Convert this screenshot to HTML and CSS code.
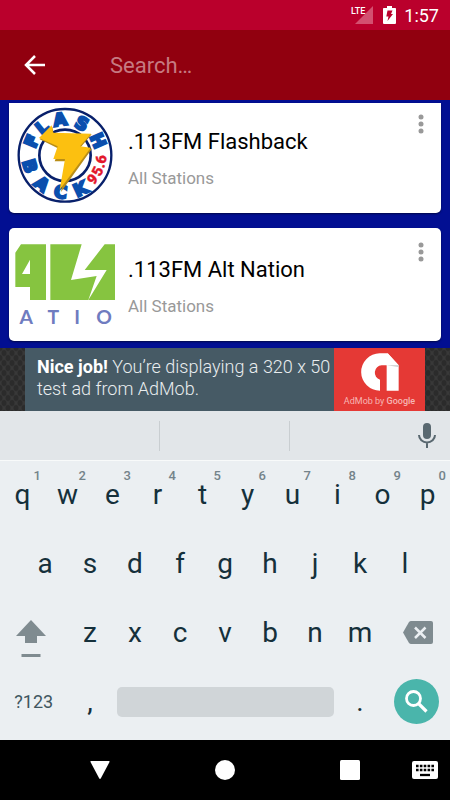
FILE: index.html
```
<!DOCTYPE html>
<html lang="en">
<head>
  <meta charset="UTF-8">
  <meta name="viewport" content="width=device-width, initial-scale=1.0">
  <title>Radio Stations</title>
  <link rel="stylesheet" href="styles.css">
</head>
<body>
<div class="screen">
  <!-- Status bar -->
  <div class="status-bar">
    <svg class="signal" width="24" height="20" viewBox="0 0 24 20">
      <path d="M23 1v18H5z" fill="#d35070"/>
      <text x="1" y="9" class="lte">LTE</text>
    </svg>
    <svg width="13" height="18" viewBox="0 0 13 18">
      <path d="M4 0h5v2h3.200q.8 0 .8.800V17q0 1-1 1H1q-1 0-1-1V2.800Q0 2 .8 2H4z" fill="#fff"/>
      <path d="M4.500 4.500h5L8 8h2l-5.500 7 1-4.500H3.300z" fill="#ba002c"/>
    </svg>
    <span class="clock">1:57</span>
  </div>

  <!-- Search toolbar -->
  <header class="toolbar">
    <button class="back" aria-label="Back">
      <svg width="22" height="22" viewBox="0 0 22 22" fill="none" stroke="#fff" stroke-width="2.500">
        <path d="M21 11H3M11 2l-9 9 9 9"/>
      </svg>
    </button>
    <input class="search" type="text" placeholder="Search…" aria-label="Search">
  </header>

  <!-- Stations -->
  <main class="stations">
    <article class="card card-first">
      <svg class="logo" viewBox="45 33 300 300">
        <g transform="translate(195 181)">
          <circle r="139" fill="#fff" stroke="#08206b" stroke-width="7"/>
          <circle r="77" fill="#fff" stroke="#08206b" stroke-width="8"/>
          <g class="ring-text">
            <text y="-90" transform="rotate(-67)">F</text>
            <text y="-90" transform="rotate(-39)">L</text>
            <text y="-90" transform="rotate(-8)">A</text>
            <text y="-90" transform="rotate(28)">S</text>
            <text y="-90" transform="rotate(66)">H</text>
            <text y="129" transform="rotate(73)">B</text>
            <text y="129" transform="rotate(39)">A</text>
            <text y="129" transform="rotate(7)">C</text>
            <text y="129" transform="rotate(-25)">K</text>
          </g>
          <g class="ring-freq">
            <text y="124" transform="rotate(-49)">9</text>
            <text y="124" transform="rotate(-64)">5</text>
            <text y="124" transform="rotate(-74)">.</text>
            <text y="124" transform="rotate(-84)">6</text>
          </g>
          <path d="M-76-48l38-37 4 20 114 2-33 39 34 4-93 130 18-92h-37l14-37z" fill="#b98d16"/>
          <path d="M-78-52l38-38 4 22 114 3-33 38 32 4-93 126 16-92h-35l13-38z" fill="#fcc010"/>
        </g>
      </svg>
      <div class="card-text">
        <h2>.113FM Flashback</h2>
        <p>All Stations</p>
      </div>
      <button class="more" aria-label="More options">
        <svg width="6" height="20" viewBox="0 0 6 20" fill="#999">
          <circle cx="3" cy="3" r="2.500"/><circle cx="3" cy="10" r="2.500"/><circle cx="3" cy="17" r="2.500"/>
        </svg>
      </button>
    </article>

    <article class="card">
      <svg class="logo" viewBox="45 42 300 300">
        <path d="M63 73h75v167H90v-39H46V98zM90 119l-24 43h24z" fill="#86c440" fill-rule="evenodd"/>
        <path d="M151 73h94l-32 107 77-12-25 72H151zM314 73h33v167h-82l55-90h-66z" fill="#86c440"/>
        <g class="alt-text">
          <text x="79" y="312">A</text>
          <text x="160" y="312">T</text>
          <text x="231" y="312">I</text>
          <text x="312" y="312">O</text>
        </g>
      </svg>
      <div class="card-text">
        <h2>.113FM Alt Nation</h2>
        <p>All Stations</p>
      </div>
      <button class="more" aria-label="More options">
        <svg width="6" height="20" viewBox="0 0 6 20" fill="#999">
          <circle cx="3" cy="3" r="2.500"/><circle cx="3" cy="10" r="2.500"/><circle cx="3" cy="17" r="2.500"/>
        </svg>
      </button>
    </article>
  </main>

  <!-- Ad banner -->
  <aside class="ad">
    <div class="ad-text">
      <p><strong>Nice job!</strong> <span>You’re displaying a 320 x 50</span></p>
      <p>test ad from AdMob.</p>
    </div>
    <div class="ad-brand">
      <svg width="38" height="38" viewBox="0 0 114 114">
        <path d="M56 1h24l33 36v76H77V37H62a22 22 0 0 0-5 43v33A56 56 0 0 1 56 1z" fill="#fff"/>
        <path d="M77 37h36L80 1z" fill="#fff"/>
        <path d="M77 37h36v5z" fill="#c9c9c9"/>
      </svg>
      <span>AdMob by <b>Google</b></span>
    </div>
  </aside>

  <!-- Keyboard -->
  <section class="keyboard" aria-label="Keyboard">
    <div class="suggestions">
      <span></span>
      <span></span>
      <span></span>
      <button class="mic" aria-label="Voice input">
        <svg width="18" height="25" viewBox="0 0 18 25">
          <rect x="5" y="0" width="8" height="16" rx="4" fill="#596870"/>
          <path d="M1 12a8 7.500 0 0 0 16 0M9 19.500V25" fill="none" stroke="#596870" stroke-width="2"/>
        </svg>
      </button>
    </div>

    <div class="row">
      <button class="key">q<sup>1</sup></button>
      <button class="key">w<sup>2</sup></button>
      <button class="key">e<sup>3</sup></button>
      <button class="key">r<sup>4</sup></button>
      <button class="key">t<sup>5</sup></button>
      <button class="key">y<sup>6</sup></button>
      <button class="key">u<sup>7</sup></button>
      <button class="key">i<sup>8</sup></button>
      <button class="key">o<sup>9</sup></button>
      <button class="key">p<sup>0</sup></button>
    </div>

    <div class="row">
      <button class="key">a</button>
      <button class="key">s</button>
      <button class="key">d</button>
      <button class="key">f</button>
      <button class="key">g</button>
      <button class="key">h</button>
      <button class="key">j</button>
      <button class="key">k</button>
      <button class="key">l</button>
    </div>

    <div class="row">
      <button class="key key-wide key-shift" aria-label="Shift">
        <svg width="30" height="38" viewBox="0 0 30 38" fill="#7f8b90">
          <path d="M15 0l15 16H21v7H9v-7H0z"/>
          <path d="M5.500 34h19v3h-19z"/>
        </svg>
      </button>
      <button class="key">z</button>
      <button class="key">x</button>
      <button class="key">c</button>
      <button class="key">v</button>
      <button class="key">b</button>
      <button class="key">n</button>
      <button class="key">m</button>
      <button class="key key-wide key-delete" aria-label="Delete">
        <svg width="30" height="23" viewBox="0 0 30 23">
          <path d="M8 0h20q2 0 2 2v19q0 2-2 2H8q-1 0-2-1L0 11.500 6 1q1-1 2-1z" fill="#7f8b90"/>
          <path d="M12 6.500l10.500 10.500M22.500 6.500L12 17" stroke="#ebeff2" stroke-width="2.500"/>
        </svg>
      </button>
    </div>

    <div class="row">
      <button class="key key-wide key-symbols">?123</button>
      <button class="key">,</button>
      <button class="key-space" aria-label="Space"></button>
      <button class="key">.</button>
      <button class="key key-wide" aria-label="Search">
        <svg width="45" height="45" viewBox="0 0 45 45">
          <circle cx="22.500" cy="22.500" r="22.500" fill="#4ab5ab"/>
          <circle cx="19.500" cy="19.500" r="7" fill="none" stroke="#fff" stroke-width="2.800"/>
          <path d="M24.500 24.500l8 8" stroke="#fff" stroke-width="3.200"/>
        </svg>
      </button>
    </div>
  </section>

  <!-- Navigation bar -->
  <nav class="nav-bar">
    <button aria-label="Hide keyboard">
      <svg width="20" height="20" viewBox="0 0 20 20"><path d="M1 1h18q1 0 .5 1l-8.500 16q-1 2-2 0L.5 2Q0 1 1 1z" fill="#fff"/></svg>
    </button>
    <button aria-label="Home">
      <svg width="20" height="20" viewBox="0 0 20 20"><circle cx="10" cy="10" r="10" fill="#fff"/></svg>
    </button>
    <button aria-label="Recent apps">
      <svg width="20" height="20" viewBox="0 0 20 20"><rect width="20" height="20" rx="1.500" fill="#fff"/></svg>
    </button>
    <button class="nav-ime" aria-label="Switch keyboard">
      <svg width="26" height="18" viewBox="0 0 26 18">
        <rect width="26" height="18" rx="2" fill="#fff"/>
        <path d="M4 5h18M4 9h18" stroke="#000" stroke-width="2.300" stroke-dasharray="2.600 1.250"/>
        <path d="M8 14h10" stroke="#000" stroke-width="2.300"/>
      </svg>
    </button>
  </nav>
</div>
</body>
</html>
```

FILE: styles.css
```
* {
  box-sizing: border-box;
}

body {
  margin: 0;
  font-family: Roboto, sans-serif;
  background: #000;
}

button {
  padding: 0;
  border: 0;
  background: none;
  font: inherit;
  color: inherit;
  cursor: pointer;
}

svg {
  display: block;
}

.screen {
  display: flex;
  flex-direction: column;
  min-height: 100vh;
}

/* Status bar */
.status-bar {
  display: flex;
  align-items: center;
  justify-content: flex-end;
  height: 30px;
  padding: 0 11px;
  background: #ba002c;
  color: #fff;
}

.signal {
  margin-right: 9px;
}

.lte {
  font-size: 9px;
  font-weight: 500;
  fill: #fff;
}

.clock {
  margin-left: 8px;
  font-size: 18px;
}

/* Toolbar */
.toolbar {
  display: flex;
  align-items: center;
  height: 70px;
  background: #91000f;
}

.back {
  padding: 0 24px;
}

.search {
  flex: 1;
  min-width: 0;
  margin-left: 40px;
  padding: 0;
  border: 0;
  outline: 0;
  background: none;
  color: #fff;
  font-family: inherit;
  font-size: 22px;
}

.search::placeholder {
  color: #c67a82;
  opacity: 1;
}

/* Station list */
.stations {
  flex: 1;
  display: flex;
  flex-direction: column;
  gap: 15px;
  padding: 3px 9px 7px;
  background: #020f92;
}

.card {
  display: flex;
  align-items: flex-start;
  padding: 6px 17px 7px 6px;
  border-radius: 5px;
  background: #fff;
  box-shadow: 0 1px 2px rgba(0, 0, 0, 0.5);
}

/* scrolled partly under the toolbar */
.card-first {
  padding-top: 3px;
  border-radius: 0 0 5px 5px;
}

.logo {
  width: 100px;
  height: 100px;
  flex-shrink: 0;
}

.card-text {
  flex: 1;
  padding: 23px 0 0 13px;
}

.card-text h2 {
  margin: 0 0 12px;
  font-size: 22px;
  line-height: 26px;
  font-weight: 400;
  color: #000;
}

.card-text p {
  margin: 0;
  font-size: 17px;
  line-height: 22px;
  color: #999;
}

.more {
  padding-top: 8px;
}

.ring-text {
  font-family: "DejaVu Sans", sans-serif;
  font-size: 52px;
  font-weight: 700;
  fill: #0a4fae;
  stroke: #0a4fae;
  stroke-width: 7;
  text-anchor: middle;
}

.ring-freq {
  font-family: Roboto, sans-serif;
  font-size: 44px;
  font-weight: 900;
  fill: #e3172b;
  stroke: #e3172b;
  stroke-width: 1;
  text-anchor: middle;
}

.alt-text {
  font-family: Lato, sans-serif;
  font-size: 58px;
  font-weight: 700;
  fill: #6f7cc0;
  text-anchor: middle;
}

/* Ad banner */
.ad {
  display: flex;
  height: 63px;
  padding: 0 25px;
  background-color: #383838;
  background-image: radial-gradient(#2b2b2b 2px, transparent 3px), radial-gradient(#2b2b2b 2px, transparent 3px);
  background-size: 8px 10px;
  background-position: 0 0, 4px 5px;
}

.ad-text {
  flex: 1;
  padding: 8px 0 0 12px;
  background: #465a65;
  color: #e9edef;
  font-size: 18px;
  line-height: 22px;
  font-weight: 300;
}

.ad-text p {
  margin: 0;
}

.ad-text strong {
  font-weight: 700;
  color: #fff;
}

.ad-brand {
  display: flex;
  flex-direction: column;
  align-items: center;
  width: 91px;
  padding-top: 5px;
  background: #e53935;
  color: #f6b5b3;
  font-size: 9px;
  line-height: 20px;
}

.ad-brand b {
  font-weight: 500;
}

/* Keyboard */
.keyboard {
  padding-bottom: 3px;
  background: #ebeff2;
  color: #15303b;
}

.suggestions {
  display: grid;
  grid-template-columns: 130px 130px 1fr 46px;
  align-items: center;
  height: 50px;
  padding-left: 29px;
  border-bottom: 1px solid #f8fafa;
  background: #e2e6e9;
}

.suggestions span {
  height: 30px;
}

.suggestions span + span {
  border-left: 1px solid #c9ced1;
}

.mic {
  justify-self: center;
}

.row {
  display: flex;
  justify-content: center;
  height: 69px;
}

.key {
  position: relative;
  width: 10%;
  padding-bottom: 2px;
  font-size: 28px;
  line-height: 32px;
}

.key sup {
  position: absolute;
  top: 7px;
  right: 4px;
  font-size: 13px;
  line-height: 16px;
  font-weight: 500;
  color: #74838a;
}

.key-wide {
  display: flex;
  align-items: center;
  justify-content: center;
  width: 15%;
}

.key-shift {
  padding: 10px 5px 0 0;
}

.key-delete {
  padding-left: 4px;
}

.key-symbols {
  font-size: 18px;
  color: #40565f;
}

.key-space {
  align-self: center;
  width: calc(50% - 8px);
  height: 30px;
  margin: 0 4px 2px;
  border-radius: 5px;
  background: #d0d5d8;
}

/* Navigation bar */
.nav-bar {
  display: grid;
  grid-template-columns: 1fr 1fr 1fr 38px;
  place-items: center;
  height: 60px;
  padding-left: 38px;
  background: #000;
}

.nav-ime {
  justify-self: start;
}
```
